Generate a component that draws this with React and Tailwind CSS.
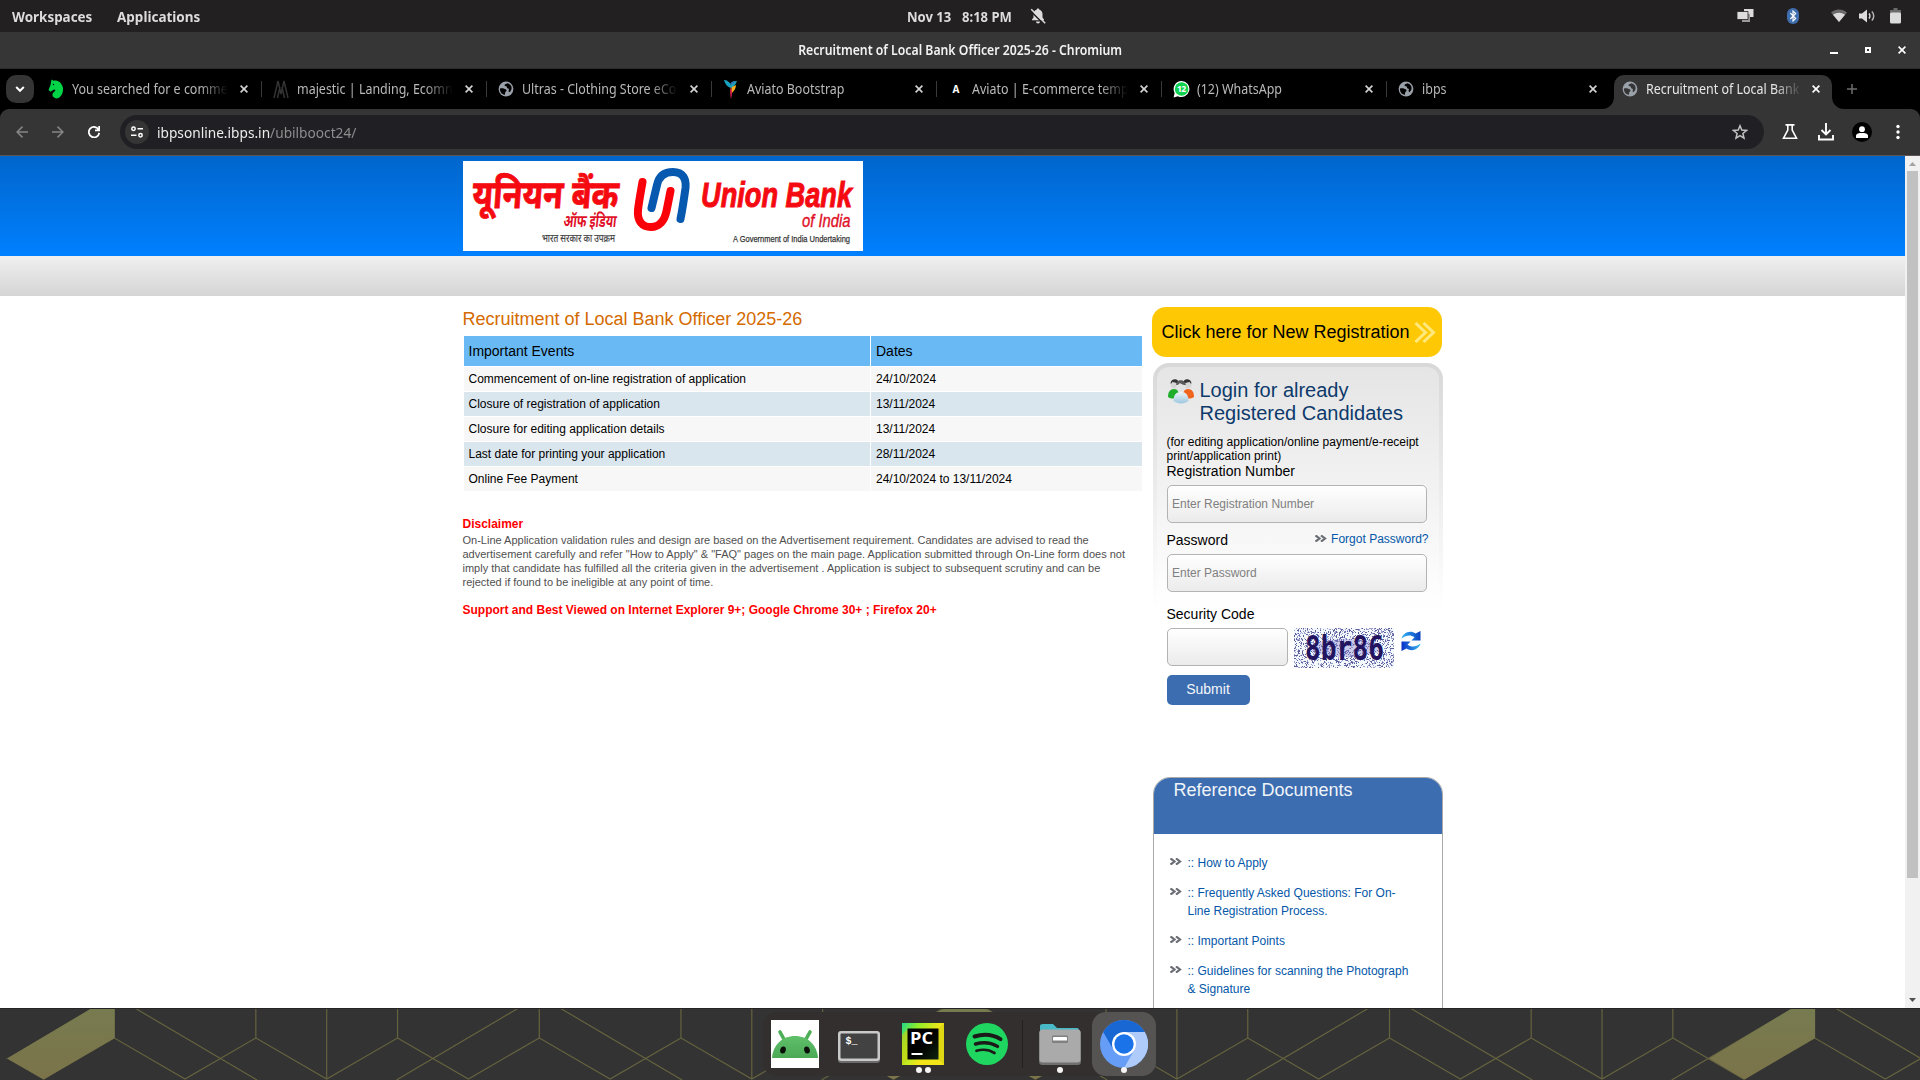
import React from "react";

const UI = "font-['Noto_Sans','Open_Sans',sans-serif]";

function Globe({ land = "#000" }) {
  return (
    <svg className="h-4 w-4 shrink-0" viewBox="0 0 16 16">
      <circle cx="8" cy="8" r="7.400" fill="#9aa0a9" />
      <path d="M2 7.600C3.500 7.200 5.200 7.200 6.200 7.800c.8.5 2.300.4 2.400 1.600.1 1-1.300 1-1.400 2.100 0 .8-.3 1.700-.6 2.500C3.700 13.400 1.700 10.800 2 7.600z" fill={land} />
      <path d="M9.400 2.300C8.500 3 6.600 2.900 6.500 4.200c0 1 1.300.8 2 1.400.8.700 0 1.600 1.200 1.800 1.300.1 1.500 1.100 1 1.900-.4.700 0 1.500.6 2 1.900-1.300 2.900-3.700 2-6C12.500 3.700 11.200 2.700 9.400 2.300z" fill={land} />
    </svg>
  );
}

const EnvatoIcon = () => (
  <svg className="h-5 w-4 shrink-0" viewBox="0 0 16 20">
    <path d="M3.500 .5l2 1.200C9.500 1 14 3.500 15 9c.5 5-2 9.500-6 10.500-3-.2-5-2-4.500-4.200.4-1.800 2.500-2.800 3-4.300L6 10.500l-3.500 2.200L.5 11l2-5z" fill="#00d346" />
    <circle cx="5.500" cy="5.500" r=".7" fill="#000" />
  </svg>
);

const MajesticIcon = () => (
  <svg className="h-5 w-4 shrink-0" viewBox="0 0 16 20" fill="none" stroke="#333" strokeWidth="1.500">
    <path d="M1 19L5 2l3 13 3-13 4 17M4.500 19L7 8M11.500 19L9 8" />
  </svg>
);

const BirdIcon = () => (
  <svg className="h-5 w-4 shrink-0" viewBox="0 0 16 20">
    <path d="M1 1c3 0 6 2 7 5 1-3 3-4 6-4-1 3-3 5-5 7-4 0-7-4-8-8z" fill="#17a2c0" />
    <path d="M7 5c1-2 3-3.500 6-3-1.500 1-2 2-4 4z" fill="#2d7fb8" />
    <path d="M13 6c0 3-2 6-4 8-1-2-1-4 0-6z" fill="#fbb01b" />
    <path d="M7.500 8c2 3 1.500 8 .5 12-1-4-1-8-.5-12z" fill="#e4254f" />
  </svg>
);

const AviatoIcon = () => (
  <span className="flex h-4 w-4 shrink-0 items-center justify-center text-[10px] font-bold text-white">A</span>
);

const WhatsAppIcon = () => (
  <svg className="-mr-px h-[18px] w-[17px] shrink-0" viewBox="0 0 17 18">
    <path d="M8.500 1a8 8 0 1 1-3.600 15.200L.6 17.500l1-4.600A8 8 0 0 1 8.500 1z" fill="#fff" />
    <circle cx="8.600" cy="9" r="6.800" fill="#10d050" />
    <text x="8.600" y="12" fontSize="8.500" fontWeight="700" fill="#fff" textAnchor="middle" textLength="9" fontFamily="Noto Sans">12</text>
  </svg>
);

const Cross = ({ className = "text-[#d4d4d4]" }) => (
  <svg className={"h-2 w-2 shrink-0 " + className} viewBox="0 0 8 8" stroke="currentColor" strokeWidth="1.600">
    <path d="M.6.6l6.800 6.800M7.400.6L.6 7.400" />
  </svg>
);

const tabs = [
  { title: "You searched for e comme", icon: <EnvatoIcon /> },
  { title: "majestic | Landing, Ecomn", icon: <MajesticIcon /> },
  { title: "Ultras - Clothing Store eCo", icon: <Globe /> },
  { title: "Aviato Bootstrap", icon: <BirdIcon /> },
  { title: "Aviato | E-commerce temp", icon: <AviatoIcon /> },
  { title: "(12) WhatsApp", icon: <WhatsAppIcon /> },
  { title: "ibps", icon: <Globe /> },
];

function TabTitle({ children, active }) {
  return (
    <div
      className={
        "ml-2 flex h-5 w-[156px] shrink-0 overflow-hidden whitespace-nowrap [mask-image:linear-gradient(to_right,#000_82%,transparent)] " +
        (active ? "text-[#e6e6e6]" : "text-[#b9b9b9]")
      }
    >
      <span className="block h-5 origin-left scale-x-[0.89] text-[14px] leading-[19px]">{children}</span>
    </div>
  );
}

function TopPanel() {
  return (
    <div className="flex h-8 items-center bg-[#232021] text-[14.500px] leading-[30px] font-bold text-[#dcdcdc]">
      <div className="flex w-[640px] pl-3">
        <span className="block w-[105px]"><span className="block w-max origin-left scale-x-[0.925]">Workspaces</span></span>
        <span className="block origin-left scale-x-[0.93]">Applications</span>
      </div>
      <div className="flex w-[640px] items-center pl-[267px]">
        <span className="block w-[55px]"><span className="block w-max origin-left scale-x-[0.9]">Nov&nbsp;13</span></span>
        <span className="block w-[68px]"><span className="block w-max origin-left scale-x-[0.9]">8:18&nbsp;PM</span></span>
        <svg className="h-4 w-4" viewBox="0 0 16 16">
          <path d="M8 .5c.8 0 1.200.5 1.200 1.100 2 .6 3.300 2.300 3.300 4.400v3.500L14 11.500v.8H2v-.8l1.500-2V6c0-2.100 1.300-3.800 3.300-4.400C6.800 1 7.200.5 8 .5z" fill="#dcdcdc" />
          <path d="M6 13.500h4c0 1.200-.8 2-2 2s-2-.8-2-2z" fill="#dcdcdc" />
          <path d="M.5 2.800L13 15.300" stroke="#232021" strokeWidth="1.600" />
          <path d="M1.200 1.200L15.200 15.200" stroke="#dcdcdc" strokeWidth="1.500" />
        </svg>
      </div>
      <div className="flex flex-1 items-center justify-end pr-[19px]">
        <svg className="mr-[33px] h-4 w-[17px]" viewBox="0 0 17 16">
          <path d="M7 1h9.500v8H7z" fill="#dcdcdc" />
          <path d="M5 6h8v8H5z" fill="#9a9a9a" />
          <path d="M0 3.500h11v8H0z" fill="#dcdcdc" stroke="#232021" strokeWidth=".8" />
        </svg>
        <svg className="mr-8 h-4 w-3" viewBox="0 0 12 16">
          <rect width="12" height="16" rx="6" fill="#3f6fae" />
          <path d="M3.300 5l5.400 5.500L6 13V3l2.700 2.500L3.300 11" fill="none" stroke="#fff" strokeWidth="1.100" />
        </svg>
        <svg className="mr-3 h-4 w-4" viewBox="0 0 16 16">
          <path d="M0 4.500c4.500-4 11.500-4 16 0L8 14z" fill="#6b6b6b" />
          <path d="M2 6.800c3.500-2.800 8.500-2.800 12 0L8 14z" fill="#dcdcdc" />
        </svg>
        <svg className="mr-[15px] h-4 w-4" viewBox="0 0 16 16">
          <path d="M0 5.500h3L8 1.500v13l-5-4H0z" fill="#dcdcdc" />
          <path d="M10 5.500c1.200 1.300 1.200 3.700 0 5" fill="none" stroke="#dcdcdc" strokeWidth="1.500" />
          <path d="M12.800 3.500c2.600 2.400 2.600 6.600 0 9" fill="none" stroke="#b5b5b5" strokeWidth="1.500" />
        </svg>
        <svg className="h-4 w-[11px]" viewBox="0 0 11 16">
          <path d="M3.500 0h4v2H11v5H0V2h3.500z" fill="#6b6b6b" />
          <rect y="4.500" width="11" height="11" rx="1.500" fill="#dcdcdc" />
        </svg>
      </div>
    </div>
  );
}

function TitleBar() {
  return (
    <div className="flex h-[37px] items-center border-b border-[#2a2a2a] bg-[#363636]">
      <div className="w-[100px]" />
      <div className="flex flex-1 justify-center pb-px text-[14px] font-semibold text-[#f2f2f2]">
        <span className="block scale-x-[0.875] whitespace-nowrap">Recruitment of Local Bank Officer 2025-26 - Chromium</span>
      </div>
      <div className="flex w-[100px] items-center justify-end pr-[14px]">
        <svg className="mr-[27px] h-2 w-2" viewBox="0 0 8 8"><path d="M0 6h8v2H0z" fill="#fff" /></svg>
        <svg className="mr-[27px] h-1.5 w-1.5" viewBox="0 0 6 6"><path d="M1 1h4v4H1z" fill="none" stroke="#fff" strokeWidth="2" /></svg>
        <Cross className="text-white" />
      </div>
    </div>
  );
}

function TabStrip() {
  return (
    <div className="flex h-10 bg-black pl-[6px]">
      <div className="mt-1.5 flex h-7 w-7 items-center justify-center rounded-[10px] bg-[#353535]">
        <svg className="h-2 w-[10px]" viewBox="0 0 10 8" fill="none" stroke="#fff" strokeWidth="2"><path d="M1.200 2L5 5.800 8.800 2" /></svg>
      </div>
      <div className="ml-[3px] flex">
        {tabs.map((t, i) => (
          <div key={t.title} className={"flex items-center pl-[11px] " + (i === 6 ? "w-[214px]" : "w-[225px]")}>
            {t.icon}
            <TabTitle>{t.title}</TabTitle>
            <Cross className={i === 6 ? "ml-[11px] text-[#d4d4d4]" : "ml-3 text-[#d4d4d4]"} />
            {i < 6 && <div className="ml-[13px] h-4 w-0.5 bg-[#3a3a3a]" />}
          </div>
        ))}
      </div>
      <div className="flex pl-[1px]">
        <div className="w-3 bg-[#353535]"><div className="h-10 w-3 rounded-br-[12px] bg-black" /></div>
        <div className="w-[218px] pt-1.5">
          <div className="flex h-[34px] w-[218px] items-center rounded-t-[10px] bg-[#353535] pb-1.5 pl-[8px]">
            <Globe land="#353535" />
            <TabTitle active>Recruitment of Local Bank</TabTitle>
            <Cross className="ml-[10px] text-white" />
          </div>
        </div>
        <div className="w-3 bg-[#353535]"><div className="h-10 w-3 rounded-bl-[12px] bg-black" /></div>
      </div>
      <div className="flex items-center pl-[3px]">
        <svg className="h-2.5 w-2.5" viewBox="0 0 10 10" stroke="#6e6e6e" strokeWidth="1.500"><path d="M5 0v10M0 5h10" /></svg>
      </div>
    </div>
  );
}

function Toolbar() {
  return (
    <div className="h-[47px] border-b border-[#5a5552] bg-black">
      <div className="flex h-[46px] items-center rounded-t-[9px] bg-[#353535] pl-4">
        <svg className="h-3 w-3" viewBox="0 0 12 12" fill="none" stroke="#858585" strokeWidth="1.500"><path d="M12 6H1M6.500.6L1.100 6l5.400 5.400" /></svg>
        <svg className="ml-6 h-3 w-3" viewBox="0 0 12 12" fill="none" stroke="#858585" strokeWidth="1.500"><path d="M0 6h11M5.500.6L10.900 6l-5.400 5.400" /></svg>
        <svg className="ml-6 h-3 w-3" viewBox="0 0 12 12" fill="none" stroke="#fff" strokeWidth="1.800"><path d="M10.500 3.500A5.200 5.200 0 1 0 11.200 6.800M11.200 0v4.300H7" /></svg>
        <div className="ml-5 flex h-[34px] w-[1644px] items-center rounded-full bg-[#202024] pl-[5px]">
          <div className="flex h-6 w-6 items-center justify-center rounded-full bg-[#353535]">
            <svg className="h-3 w-3" viewBox="0 0 12 12" fill="none" stroke="#fff" strokeWidth="1.500"><circle cx="2.500" cy="2.800" r="1.700" /><path d="M6.500 2.800H12M0 9.200h5.500" /><circle cx="9.500" cy="9.200" r="1.700" /></svg>
          </div>
          <span className="mb-px ml-2 block origin-left scale-x-[0.912] text-[15px] leading-5 whitespace-nowrap text-[#8d8d8f]">
            <span className="text-[#ececec]">ibpsonline.ibps.in</span>/ubilbooct24/
          </span>
          <svg className="mr-[16px] ml-auto h-4 w-4" viewBox="0 0 16 16" fill="none" stroke="#c2c2c4" strokeWidth="1.500"><path d="M8 1.800l1.800 4.300 4.700.4-3.600 3 1.100 4.600L8 11.600l-4 2.500 1.100-4.600-3.600-3 4.700-.4z" /></svg>
        </div>
        <svg className="ml-[18px] h-4 w-4" viewBox="0 0 16 16" fill="none" stroke="#fff" strokeWidth="1.600"><path d="M3.500.9h9M5.800 1v5L1.500 14.200h13L10.200 6V1" /></svg>
        <svg className="ml-5 h-[18px] w-4" viewBox="0 0 16 18" fill="none" stroke="#fff" strokeWidth="1.900"><path d="M8 0v11M3.500 7L8 11.400 12.500 7M1 12v4.500h14V12" /></svg>
        <div className="ml-[18px] flex h-5 w-5 items-center justify-center rounded-full bg-black">
          <svg className="h-3 w-3" viewBox="0 0 12 12" fill="#fff"><circle cx="6" cy="3.200" r="2.900" /><path d="M0 12V9.800C0 7.500 3 7 6 7s6 .5 6 2.800V12z" /></svg>
        </div>
        <svg className="ml-6 h-4 w-1" viewBox="0 0 4 16" fill="#fff"><circle cx="2" cy="2.500" r="1.700" /><circle cx="2" cy="8" r="1.700" /><circle cx="2" cy="13.500" r="1.700" /></svg>
      </div>
    </div>
  );
}

function UnionBankLogo() {
  return (
    <svg className="block h-[90px] w-[400px] bg-white" viewBox="0 0 400 90">
      <g fontFamily="'Noto Sans Devanagari','Noto Sans',sans-serif">
        <text x="9" y="47.500" transform="skewX(-4) translate(3 0)" fontSize="39" fontWeight="700" fill="#f40a10" stroke="#f40a10" strokeWidth=".8" textLength="146" lengthAdjust="spacingAndGlyphs">यूनियन बैंक</text>
        <text x="105" y="66.500" transform="skewX(-6) translate(2 0)" fontSize="17.500" fontWeight="700" fill="#e01028" textLength="53" lengthAdjust="spacingAndGlyphs">ऑफ इंडिया</text>
        <text x="79" y="81" fontSize="10.500" fill="#444" stroke="#444" strokeWidth=".2" textLength="73" lengthAdjust="spacingAndGlyphs">भारत सरकार का उपक्रम</text>
      </g>
      <g fill="none" strokeLinecap="round" strokeWidth="8">
        <path d="M179.500 21C178 30 176 40 175 49C174 60 179 66 188 66C196 66 201.500 60 203.500 50L207.500 30" stroke="#fa0008" />
        <path d="M188.500 47L194 24C196 14.500 202 11 210 11C220 11 223.500 18 222.500 27C221 38 219.500 48 217.500 58" stroke="#0759b0" />
      </g>
      <g fontFamily="'Liberation Sans',Arial,sans-serif">
        <text x="238" y="46" fontSize="35" fontWeight="700" fontStyle="italic" fill="#f40a10" stroke="#f40a10" strokeWidth="1" textLength="151" lengthAdjust="spacingAndGlyphs">Union Bank</text>
        <text x="339" y="66" fontSize="19" fontStyle="italic" fill="#e01028" stroke="#e01028" strokeWidth=".4" textLength="48.500" lengthAdjust="spacingAndGlyphs">of India</text>
        <text x="270" y="80.500" fontSize="9.500" fill="#333" stroke="#333" strokeWidth=".25" textLength="117" lengthAdjust="spacingAndGlyphs" fontFamily="'Liberation Sans'">A Government of India Undertaking</text>
      </g>
    </svg>
  );
}

const events = [
  ["Commencement of on-line registration of application", "24/10/2024"],
  ["Closure of registration of application", "13/11/2024"],
  ["Closure for editing application details", "13/11/2024"],
  ["Last date for printing your application", "28/11/2024"],
  ["Online Fee Payment", "24/10/2024 to 13/11/2024"],
];

function MainColumn() {
  return (
    <div className="w-[689.500px] pt-[13px]">
      <h1 className="text-[18px] leading-5 text-[#d46a00]">Recruitment of Local Bank Officer 2025-26</h1>
      <div className="mt-[7px] ml-[1.500px] grid w-[678px] grid-cols-[406px_271px] gap-px text-[12px] leading-6 text-black">
        <div className="h-[30px] bg-[#68b9f4] pl-[4.500px] text-[14px] leading-[30px]">Important Events</div>
        <div className="h-[30px] bg-[#68b9f4] pl-[5px] text-[14px] leading-[30px]">Dates</div>
        {events.map(([name, date], i) => (
          <React.Fragment key={name}>
            <div className={"h-6 pl-[4.500px] " + (i % 2 ? "bg-[#dae6ee]" : "bg-[#f7f7f7]")}>{name}</div>
            <div className={"h-6 pl-[5px] " + (i % 2 ? "bg-[#dae6ee]" : "bg-[#f7f7f7]")}>{date}</div>
          </React.Fragment>
        ))}
      </div>
      <h2 className="mt-[25px] text-[12px] leading-4 font-bold text-[#f00]">Disclaimer</h2>
      <p className="mt-px text-[11px] leading-[14px] text-[#505050]">
        On-Line Application validation rules and design are based on the Advertisement requirement. Candidates are advised to read the<br />
        advertisement carefully and refer "How to Apply" &amp; "FAQ" pages on the main page. Application submitted through On-Line form does not<br />
        imply that candidate has fulfilled all the criteria given in the advertisement . Application is subject to subsequent scrutiny and can be<br />
        rejected if found to be ineligible at any point of time.
      </p>
      <p className="mt-[13px] text-[12px] leading-4 font-bold text-[#f00]">Support and Best Viewed on Internet Explorer 9+; Google Chrome 30+ ; Firefox 20+</p>
    </div>
  );
}

const Chevrons = ({ className = "" }) => (
  <svg className={"h-[7px] w-3 shrink-0 " + className} viewBox="0 0 12 7" fill="none" stroke="#6b6f75" strokeWidth="2.200">
    <path d="M.5.4L4.500 3.500.5 6.600M6 .4L10 3.500 6 6.600" />
  </svg>
);

const PeopleIcon = () => (
  <svg className="-mt-px h-[26px] w-7 shrink-0" viewBox="0 0 28 26">
    <defs>
      <linearGradient id="torso" x1="0" y1="0" x2="0" y2="1"><stop offset="0" stopColor="#eef5f9" /><stop offset="1" stopColor="#9cc6de" /></linearGradient>
    </defs>
    <path d="M1 19c0-5 2-8 6-8s5 3 5 8c-3 2-8 2-11 0z" fill="#1fae2c" />
    <path d="M16 19c0-5 1-8 5-8s6 3 6 8c-3 2-8 2-11 0z" fill="#f0641e" />
    <circle cx="7.500" cy="6.500" r="4" fill="#d5d5d5" />
    <circle cx="20.500" cy="6.500" r="4" fill="#d5d5d5" />
    <path d="M3.500 5.500c0-5 8-6 8.500-.5-3 .2-5-.8-6.500-1.300-.5 1-1 1.800-2 1.800zM24.500 5.500c0-5-8-6-8.500-.5 3 .2 5-.8 6.500-1.300.5 1 1 1.800 2 1.800z" fill="#333" />
    <path d="M6.500 23c0-6 2.500-9 7.500-9s7.500 3 7.500 9c-4 3.300-11 3.300-15 0z" fill="url(#torso)" />
    <circle cx="14" cy="8.500" r="4.700" fill="#e2e2e2" />
    <path d="M9.200 7c-.5-6 9.200-6.500 9.600 0-2 0-4.600-1.200-6-2.100-.9 1.400-2 2.100-3.600 2.100z" fill="#5a5a5a" />
  </svg>
);

const noise = (() => {
  let seed = 11;
  let light = "";
  let dark = "";
  for (let y = 0; y < 40; y++) {
    for (let x = 0; x < 100; x++) {
      seed = (seed * 1103515245 + 12345) % 2147483648;
      const v = (seed / 65536) % 1000;
      if (v < 170) dark += "M" + x + " " + y + "h1v1h-1z";
      else if (v < 330) light += "M" + x + " " + y + "h1v1h-1z";
    }
  }
  return { light, dark };
})();

const Captcha = () => (
  <svg className="h-10 w-[100px] shrink-0" viewBox="0 0 100 40">
    <rect width="100" height="40" fill="#f3f8fd" />
    <path d={noise.light} fill="#9a9fce" shapeRendering="crispEdges" />
    <path d={noise.dark} fill="#5c5f9c" shapeRendering="crispEdges" />
    <ellipse cx="52" cy="20" rx="36" ry="9" fill="#8d84cf" opacity=".4" />
    <text x="11" y="32" fontSize="33" fontWeight="700" fill="#22145f" textLength="79" lengthAdjust="spacingAndGlyphs" fontFamily="'DejaVu Sans Mono',monospace">8br86</text>
  </svg>
);

const RefreshIcon = () => (
  <svg className="mt-[3px] h-5 w-5 shrink-0" viewBox="0 0 20 20">
    <defs>
      <linearGradient id="spin" x1="0" y1="0" x2="1" y2="0"><stop offset="0" stopColor="#2fb4f5" /><stop offset="1" stopColor="#0a3fc0" /></linearGradient>
      <linearGradient id="spinBack" x1="0" y1="0" x2="1" y2="0"><stop offset="0" stopColor="#0a2fc8" /><stop offset="1" stopColor="#33b9ee" /></linearGradient>
    </defs>
    <path d="M.5 7.500C2 2 9-1.500 14.500 2.500L19.500 0v9.500h-9l3-3.200C9.500 3.500 5 4 .5 7.500z" fill="url(#spin)" />
    <path d="M19.500 12.500c-1.500 5.500-8.500 9-14 5L.5 20v-9.500h9l-3 3.200c4 2.800 8.500 2.300 13-1.200z" fill="url(#spinBack)" />
  </svg>
);

const field = "rounded-[5px] border border-[#b3b3b3] bg-linear-to-b from-white to-[#ebebeb] pl-[4.500px] text-[12px] text-black outline-none placeholder:text-[#808080]";

function LoginPanel() {
  return (
    <div className="mt-[6px] ml-[1px] w-[290px] rounded-[16px] bg-[linear-gradient(to_bottom,#d8d8d8,#ffffff_245px)] p-[4px] pb-0">
      <div className="h-[310px] rounded-[12px] bg-[linear-gradient(to_bottom,#e5e5e5,#ffffff_241px)] pt-[12px] pl-[9.500px]">
        <div className="flex">
          <PeopleIcon />
          <div className="ml-[5px] text-[20px] leading-[23px] text-[#0d3a6b]">Login for already<br />Registered Candidates</div>
        </div>
        <p className="mt-[9.500px] text-[12px] leading-[14px]">(for editing application/online payment/e-receipt<br />print/application print)</p>
        <label className="block text-[14px] leading-4">Registration Number</label>
        <input className={field + " mt-1.5 block h-[38px] w-[260px]"} placeholder="Enter Registration Number" />
        <div className="mt-2 flex h-[23px] w-[262px] justify-between">
          <label className="text-[14px] leading-[18px]">Password</label>
          <a className="flex text-[12px] leading-4 text-[#0457a8]"><Chevrons className="mt-1 mr-1" />Forgot Password?</a>
        </div>
        <input className={field + " block h-[38px] w-[260px]"} placeholder="Enter Password" />
        <label className="mt-[14px] block text-[14px] leading-4">Security Code</label>
        <div className="mt-1.5 flex h-10">
          <input className={field + " h-[38px] w-[121px]"} />
          <div className="ml-1.5"><Captcha /></div>
          <div className="ml-[7px]"><RefreshIcon /></div>
        </div>
        <button className="mt-[7px] block h-[30px] w-[83px] rounded-[5px] bg-[#3c6db0] text-[14px] text-[#f3f6fa]">Submit</button>
      </div>
    </div>
  );
}

const docs = [
  [":: How to Apply"],
  [":: Frequently Asked Questions: For On-", "Line Registration Process."],
  [":: Important Points"],
  [":: Guidelines for scanning the Photograph", "& Signature"],
];

function SideColumn() {
  return (
    <div className="w-[291px] pt-[11px]">
      <button className="flex h-[50px] w-[290px] items-center rounded-[14px] bg-[#ffc805] pl-[9.500px] text-[18px] text-black">
        <span className="whitespace-nowrap">Click here for New Registration</span>
        <svg className="mt-px ml-1 h-[21px] w-[22px]" viewBox="0 0 22 21" fill="none" stroke="#ffe97e" strokeWidth="3"><path d="M1.500 1l10 9.500-10 9.500M9.500 1l10 9.500-10 9.500" /></svg>
      </button>
      <LoginPanel />
      <div className="mt-[100px] ml-[1px] h-[320px] w-[290px] rounded-t-[17px] border border-[#a9a9a9] bg-white">
        <div className="h-[56px] rounded-t-[16px] bg-[#3c6db0] pt-[2px] pl-[19.500px] text-[18px] leading-[21px] text-[#f0f4f9]">Reference Documents</div>
        <ul className="flex flex-col gap-3 pt-5 pl-4 text-[12px] leading-[18px] text-[#0457a8]">
          {docs.map((lines) => (
            <li key={lines[0]} className="flex">
              <Chevrons className="mt-1 mr-[5.500px]" />
              <span>{lines.map((l) => <span key={l} className="block whitespace-nowrap">{l}</span>)}</span>
            </li>
          ))}
        </ul>
      </div>
    </div>
  );
}

function WebPage() {
  return (
    <div className="flex h-[852px] overflow-hidden bg-white font-['Liberation_Sans',Arial,sans-serif]">
      <div className="h-[852px] w-[1905px] overflow-hidden">
        <div className="h-[100px] bg-linear-to-b from-[#0066cc] to-[#0080ff] pt-[5px] pl-[463px]"><UnionBankLogo /></div>
        <div className="h-10 bg-linear-to-b from-[#f0f0f0] to-[#d5d5d5]" />
        <div className="flex pl-[462.500px]">
          <MainColumn />
          <SideColumn />
        </div>
      </div>
      <div className="flex w-[15px] flex-col items-center bg-[#f1f1f1]">
        <svg className="mt-1.5 h-1 w-[7px]" viewBox="0 0 7 4"><path d="M0 4L3.500 0 7 4z" fill="#a3a3a3" /></svg>
        <div className="mt-[5px] h-[707px] w-[11px] bg-[#c1c1c1]" />
        <svg className="mt-auto mb-1.5 h-1 w-[7px]" viewBox="0 0 7 4"><path d="M0 0L3.500 4 7 0z" fill="#505050" /></svg>
      </div>
    </div>
  );
}

const centers = [-98.4, 326.7, 751.8, 1176.9, 1602, 2027.1];

function Wallpaper() {
  return (
    <svg className="absolute inset-0 h-[72px] w-[1920px]" viewBox="0 0 1920 72">
      <defs>
        <linearGradient id="olive" x1="0" y1="0" x2="0" y2="72" gradientUnits="userSpaceOnUse">
          <stop offset="0" stopColor="#777b50" />
          <stop offset="1" stopColor="#7b7349" />
        </linearGradient>
      </defs>
      <rect width="1920" height="72" fill="#333" />
      {centers.map((c) => (
        <g key={c} transform={"translate(" + c + " 0)"} fill="none" stroke="#65633f" strokeWidth="1.200">
          <path d="M0 0V71M-70.850 0V30L0 71 70.850 30V0M-70.850 30L-141.700 71-212.500 30V0M70.850 30L141.700 71 212.500 30" />
          <path d="M-191.900 0L-69.700 72M191.900 0L69.700 72" />
        </g>
      ))}
      <rect width="6.500" height="72" fill="#333" />
      <path d="M7 50.500L43.600 71.500 0 72z" fill="#333" />
      <path d="M0 40V0h92L7 50.500z" fill="#333" />
      <path d="M92 0h22.600v30L43.600 71.500 7 50.500z" fill="url(#olive)" />
      <path d="M1792.500 0h22.500v30l-70.500 41.500L1709 50.500z" fill="url(#olive)" />
      <path d="M945 0h39l8 4h-55zM887 68h13l-6.500 3.500zM1029 68h13l-6.500 3.500z" fill="url(#olive)" />
      <path d="M0 .5h1920" stroke="#262324" />
    </svg>
  );
}

const Dot = () => <span className="h-1.5 w-1.5 rounded-full bg-[#f5f5f5]" />;

function DockItem({ children, dots = 0, active }) {
  return (
    <div className={"relative flex h-16 w-16 shrink-0 items-center justify-center " + (active ? "rounded-[14px] bg-[#565453]" : "")}>
      {children}
      <div className="absolute bottom-[3px] flex gap-[3px]">{Array.from({ length: dots }, (_, i) => <Dot key={i} />)}</div>
    </div>
  );
}

function Dock() {
  return (
    <div className="relative flex h-[72px] justify-center bg-[#333] pt-1 pr-px">
      <Wallpaper />
      <div className="relative flex h-16 w-[393px] rounded-[14px] bg-[#332f2e]">
        <DockItem>
          <svg className="h-12 w-12" viewBox="0 0 48 48">
            <defs><linearGradient id="droid" x1="0" y1="0" x2="0" y2="1"><stop offset="0" stopColor="#5fc06a" /><stop offset="1" stopColor="#4ca855" /></linearGradient></defs>
            <rect width="48" height="48" fill="#fff" />
            <path d="M9 12l5 9M39 12l-5 9" stroke="#4caf57" strokeWidth="3.600" strokeLinecap="round" />
            <path d="M1 38C2 25 11 16 24 16s22 9 23 22z" fill="url(#droid)" />
            <ellipse cx="12" cy="30" rx="2.800" ry="3.600" fill="#0a0f0a" transform="rotate(15 12 30)" />
            <ellipse cx="36" cy="30" rx="2.800" ry="3.600" fill="#0a0f0a" transform="rotate(-15 36 30)" />
          </svg>
        </DockItem>
        <DockItem>
          <svg className="mt-[6px] h-8 w-[42px]" viewBox="0 0 42 32">
            <rect y="2" width="42" height="30" rx="3" fill="#6b6b6b" />
            <rect width="42" height="30" rx="3" fill="#c9c9c9" />
            <rect x="2.500" y="2.500" width="37" height="25" rx="1" fill="#424242" />
            <text x="7.500" y="13" fontSize="10" fontWeight="700" fill="#fff" fontFamily="'Liberation Mono',monospace">$_</text>
          </svg>
        </DockItem>
        <DockItem dots={2}>
          <svg className="h-[42px] w-[42px]" viewBox="0 0 42 42">
            <defs>
              <linearGradient id="pc" x1="0" y1="0" x2="1" y2=".6"><stop offset="0" stopColor="#21d789" /><stop offset=".3" stopColor="#8fef2a" /><stop offset=".7" stopColor="#f2e618" /></linearGradient>
              <linearGradient id="pcDark" x1="0" y1="0" x2="1" y2="1"><stop offset=".5" stopColor="#000" /><stop offset="1" stopColor="#10240f" /></linearGradient>
            </defs>
            <rect width="42" height="42" fill="url(#pc)" />
            <path d="M0 42l6-6V6L0 12zM36 6l6-6v42l-6-6z" fill="#cfcf10" opacity=".6" />
            <rect x="5.500" y="5.500" width="31" height="31" fill="url(#pcDark)" />
            <text x="8" y="21" fontSize="16" fontWeight="700" fill="#fff" textLength="23" lengthAdjust="spacingAndGlyphs" fontFamily="'Open Sans'">PC</text>
            <path d="M9.500 30h11v2h-11z" fill="#fff" />
          </svg>
        </DockItem>
        <DockItem>
          <svg className="h-[42px] w-[42px]" viewBox="0 0 42 42">
            <circle cx="21" cy="21" r="21" fill="#1fd760" />
            <g fill="none" stroke="#1c1a19" strokeLinecap="round">
              <path d="M8.500 13.500c9-2.700 19-1.600 26 2.600" strokeWidth="4" />
              <path d="M9.500 21c8-2.300 16-1.200 22 2.400" strokeWidth="3.400" />
              <path d="M10.500 27.800c6.500-1.900 13-1 18 2.200" strokeWidth="2.700" />
            </g>
          </svg>
        </DockItem>
        <div className="ml-[3px] h-12 w-px self-center bg-[#232021]" />
        <div className="ml-[5px]">
          <DockItem dots={1}>
            <svg className="h-[42px] w-[42px]" viewBox="0 0 42 42">
              <path d="M1 12V3Q1 1 4 1h10l4 4h20q2 0 2 2v6z" fill="#48b9c7" />
              <rect y="7" width="42" height="35" rx="3.500" fill="#6f6f6f" />
              <rect x=".5" y="6.500" width="41" height="33" rx="3" fill="#aaa" />
              <rect x="13" y="12.500" width="16" height="7.500" rx="1" fill="#808080" />
              <rect x="14" y="14" width="14" height="3.500" rx=".5" fill="#fff" />
            </svg>
          </DockItem>
        </div>
        <DockItem active dots={1}>
          <svg className="h-12 w-12" viewBox="0 0 48 48">
            <circle cx="24" cy="24" r="24" fill="#669df6" />
            <path d="M24 12h20.800A24 24 0 0 1 24 48l10.400-18z" fill="#aecbfa" />
            <path d="M3.200 12a24 24 0 0 1 41.600 0H24L13.600 30z" fill="#1967d2" />
            <circle cx="24" cy="24" r="12" fill="#fff" />
            <circle cx="24" cy="24" r="9.700" fill="#1a73e8" />
          </svg>
        </DockItem>
      </div>
    </div>
  );
}

export default function App() {
  return (
    <div className={"h-[1080px] w-[1920px] overflow-hidden bg-black " + UI}>
      <TopPanel />
      <TitleBar />
      <TabStrip />
      <Toolbar />
      <WebPage />
      <Dock />
    </div>
  );
}
